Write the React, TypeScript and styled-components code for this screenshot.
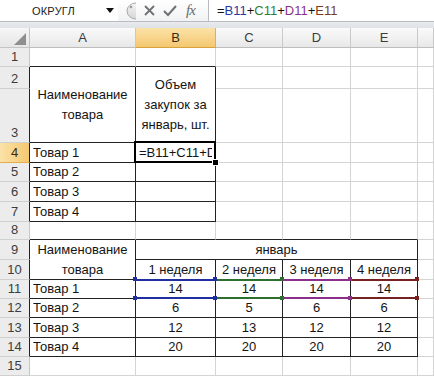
import React from "react";
import styled, { createGlobalStyle } from "styled-components";

const FONT = `"Liberation Sans", Arial, sans-serif`;
const GRID = "#d4d4d4";
const EDGE = "#222";
const INK = "#141414";

const COLS = [30, 106, 80, 67, 68, 67, 16];
const HEAD_H = 20;
const ROWS = [19, 22, 54, 20, 19, 20, 20, 18, 20, 20, 19, 19, 20, 19, 19];
const LETTERS = ["A", "B", "C", "D", "E", ""];
const ACTIVE_COL = 1;
const ACTIVE_ROW = 4;

const RANGES = ["#1f2f9f", "#2c6f2f", "#8a2f8a", "#762020"];

type Align = "left" | "center";

interface CellSpec {
  r: number;
  c: number;
  rs?: number;
  cs?: number;
  text?: string;
  align?: Align;
  active?: boolean;
  range?: number;
}

const GlobalStyle = createGlobalStyle`
  html, body {
    margin: 0;
    padding: 0;
    background: #fff;
    overflow: hidden;
  }
  body {
    font-family: ${FONT};
  }
`;

const Window = styled.div`
  width: 434px;
  height: 376px;
  overflow: hidden;
  display: flex;
  flex-direction: column;
  background: #fff;
`;

const FormulaBar = styled.div`
  height: 22px;
  box-sizing: border-box;
  display: flex;
  border-bottom: 1px solid #b8bcc2;
  background: #fff;
`;

const NameBox = styled.div`
  width: 118px;
  box-sizing: border-box;
  display: flex;
  align-items: center;
  padding: 0 4px 0 32px;
  font-size: 11px;
  color: #222;
  letter-spacing: 0.2px;
`;

const NameText = styled.span`
  flex: 1;
`;

const Controls = styled.div`
  width: 90px;
  box-sizing: border-box;
  display: flex;
  align-items: center;
  padding-left: 4px;
  gap: 8px;
  background: linear-gradient(#ffffff, #f1f2f4);
`;

const FxLabel = styled.span`
  font-family: "Liberation Serif", "Times New Roman", serif;
  font-style: italic;
  font-size: 15px;
  color: #6b6b6b;
  margin-left: 1px;
  letter-spacing: -1px;
`;

const FormulaInput = styled.div`
  flex: 1;
  box-sizing: border-box;
  border-left: 1px solid #b8bcc2;
  padding-left: 8px;
  display: flex;
  align-items: center;
  font-size: 13px;
  color: ${INK};
  white-space: pre;
`;

const Ref = styled.span<{ $color: string }>`
  color: ${(p) => p.$color};
`;

const Band = styled.div`
  height: 6px;
  background: linear-gradient(#e9ebee, #dfe2e6);
`;

const Sheet = styled.div`
  display: grid;
  grid-template-columns: ${COLS.map((c) => `${c}px`).join(" ")};
  grid-template-rows: ${[HEAD_H, ...ROWS].map((r) => `${r}px`).join(" ")};
`;

const Corner = styled.div`
  grid-row: 1;
  grid-column: 1;
  box-sizing: border-box;
  border-right: 1px solid #c5c5c5;
  border-bottom: 1px solid #c5c5c5;
  background: linear-gradient(#f6f6f6, #e6e6e6);
  display: flex;
  align-items: flex-end;
  justify-content: flex-end;
  padding: 0 3px 2px 0;
`;

const ColHead = styled.div<{ $active: boolean }>`
  grid-row: 1;
  box-sizing: border-box;
  border-right: 1px solid ${(p) => (p.$active ? "#e3ae4f" : "#c9c9c9")};
  border-bottom: 1px solid ${(p) => (p.$active ? "#d9a13e" : "#bdbdbd")};
  background: ${(p) =>
    p.$active
      ? "linear-gradient(#fbe2a8, #f4c870)"
      : "linear-gradient(#fafafa, #e8e8e8)"};
  display: flex;
  align-items: center;
  justify-content: center;
  font-size: 13px;
  color: ${(p) => (p.$active ? "#3a2a10" : "#3c3c3c")};
`;

const RowHead = styled.div<{ $active: boolean; $edge: boolean; $row: number }>`
  grid-row: ${(p) => p.$row};
  grid-column: 1;
  box-sizing: border-box;
  border-right: 1px solid
    ${(p) => (p.$edge ? EDGE : p.$active ? "#d9a13e" : "#c5c5c5")};
  border-bottom: 1px solid ${(p) => (p.$active ? "#e3ae4f" : "#d0d0d0")};
  background: ${(p) =>
    p.$active ? "linear-gradient(90deg, #fbe2a8, #f4c870)" : "#ececec"};
  display: flex;
  align-items: flex-end;
  justify-content: center;
  font-size: 13px;
  line-height: 19px;
  color: ${(p) => (p.$active ? "#3a2a10" : "#3c3c3c")};
`;

const Cell = styled.div<{
  $row: number;
  $col: number;
  $rs: number;
  $cs: number;
  $right: string;
  $bottom: string;
  $align: Align;
  $z: number;
}>`
  grid-row: ${(p) => p.$row} / span ${(p) => p.$rs};
  grid-column: ${(p) => p.$col} / span ${(p) => p.$cs};
  position: relative;
  z-index: ${(p) => p.$z};
  box-sizing: border-box;
  min-width: 0;
  border-right: 1px solid ${(p) => p.$right};
  border-bottom: 1px solid ${(p) => p.$bottom};
  display: flex;
  align-items: center;
  justify-content: ${(p) => (p.$align === "left" ? "flex-start" : "center")};
  text-align: ${(p) => p.$align};
  padding: 0 3px;
  font-size: 13px;
  line-height: 20px;
  color: ${INK};
  white-space: pre;
`;

const CellText = styled.span`
  max-width: 100%;
  overflow: hidden;
`;

const ActiveFrame = styled.span`
  position: absolute;
  top: -2px;
  left: -2px;
  right: -1px;
  bottom: -1px;
  border: 2px solid #000;
  pointer-events: none;
`;

const FillHandle = styled.span`
  position: absolute;
  right: -4px;
  bottom: -4px;
  width: 5px;
  height: 5px;
  background: #000;
  border: 1px solid #fff;
`;

const RangeLine = styled.span<{ $color: string; $side: "top" | "bottom" }>`
  position: absolute;
  left: -1px;
  right: -1px;
  height: 2px;
  ${(p) => (p.$side === "top" ? "top: -1px;" : "bottom: -1px;")}
  background: ${(p) => p.$color};
`;

const RangeDot = styled.span<{ $color: string; $v: "top" | "bottom"; $h: "left" | "right" }>`
  position: absolute;
  width: 4px;
  height: 4px;
  background: ${(p) => p.$color};
  ${(p) => (p.$v === "top" ? "top: -3px;" : "bottom: -2px;")}
  ${(p) => (p.$h === "left" ? "left: -3px;" : "right: -2px;")}
`;

function inTable(r: number, c: number) {
  return (r >= 2 && r <= 7 && c <= 1) || (r >= 9 && r <= 14 && c <= 4);
}

const goods = ["Товар 1", "Товар 2", "Товар 3", "Товар 4"];
const values = [
  [14, 14, 14, 14],
  [6, 5, 6, 6],
  [12, 13, 12, 12],
  [20, 20, 20, 20],
];

const specs: CellSpec[] = [
  { r: 2, c: 0, rs: 2, text: "Наименование\nтовара", align: "center" },
  { r: 2, c: 1, rs: 2, text: "Объем\nзакупок за\nянварь, шт.", align: "center" },
  ...goods.map((t, i) => ({ r: 4 + i, c: 0, text: t })),
  { r: 4, c: 1, text: "=B11+C11+D11+E11", active: true },
  { r: 9, c: 0, rs: 2, text: "Наименование\nтовара", align: "center" },
  { r: 9, c: 1, cs: 4, text: "январь", align: "center" },
  ...[1, 2, 3, 4].map((n) => ({ r: 10, c: n, text: `${n} неделя`, align: "center" as Align })),
  ...goods.map((t, i) => ({ r: 11 + i, c: 0, text: t })),
  ...values.flatMap((row, i) =>
    row.map((v, j) => ({
      r: 11 + i,
      c: 1 + j,
      text: String(v),
      align: "center" as Align,
      range: i === 0 ? j : undefined,
    }))
  ),
];

function buildCells(): CellSpec[] {
  const covered = new Set<string>();
  const byKey = new Map<string, CellSpec>();
  specs.forEach((s) => {
    byKey.set(`${s.r}:${s.c}`, s);
    for (let r = s.r; r < s.r + (s.rs ?? 1); r++)
      for (let c = s.c; c < s.c + (s.cs ?? 1); c++)
        if (r !== s.r || c !== s.c) covered.add(`${r}:${c}`);
  });
  const out: CellSpec[] = [];
  for (let r = 1; r <= ROWS.length; r++)
    for (let c = 0; c < LETTERS.length; c++) {
      const key = `${r}:${c}`;
      if (covered.has(key)) continue;
      out.push(byKey.get(key) ?? { r, c });
    }
  return out;
}

function SheetCell({ spec }: { spec: CellSpec }) {
  const rs = spec.rs ?? 1;
  const cs = spec.cs ?? 1;
  const lastC = spec.c + cs - 1;
  const lastR = spec.r + rs - 1;
  const right = inTable(spec.r, lastC) || inTable(spec.r, lastC + 1) ? EDGE : GRID;
  const bottom = inTable(lastR, spec.c) || inTable(lastR + 1, spec.c) ? EDGE : GRID;
  const color = spec.range !== undefined ? RANGES[spec.range] : undefined;
  const z = spec.active ? 6 : spec.range !== undefined ? 10 - spec.range : 0;

  return (
    <Cell
      $row={spec.r + 1}
      $col={spec.c + 2}
      $rs={rs}
      $cs={cs}
      $right={right}
      $bottom={bottom}
      $align={spec.align ?? "left"}
      $z={z}
    >
      {spec.text && <CellText>{spec.text}</CellText>}
      {spec.active && (
        <>
          <ActiveFrame />
          <FillHandle />
        </>
      )}
      {color && (
        <>
          <RangeLine $color={color} $side="top" />
          <RangeLine $color={color} $side="bottom" />
          <RangeDot $color={color} $v="top" $h="left" />
          <RangeDot $color={color} $v="top" $h="right" />
          <RangeDot $color={color} $v="bottom" $h="left" />
          <RangeDot $color={color} $v="bottom" $h="right" />
        </>
      )}
    </Cell>
  );
}

function Knob() {
  return (
    <svg width="14" height="18" viewBox="0 0 14 18">
      <defs>
        <linearGradient id="knob" x1="0" y1="0" x2="0" y2="1">
          <stop offset="0" stopColor="#f4f4f4" />
          <stop offset="1" stopColor="#d6d6d6" />
        </linearGradient>
      </defs>
      <path d="M14 1 A9 8 0 0 0 14 17 Z" fill="url(#knob)" />
      <path d="M14 1 A9 8 0 0 0 14 17" fill="none" stroke="#a9a9a9" strokeWidth="1" />
      <circle cx="9" cy="5" r="1.3" fill="#9a9a9a" />
    </svg>
  );
}

function App() {
  const cells = buildCells();
  return (
    <Window>
      <GlobalStyle />
      <FormulaBar>
        <NameBox>
          <NameText>ОКРУГЛ</NameText>
          <svg width="8" height="5" viewBox="0 0 8 5">
            <path d="M0 0 H8 L4 5 Z" fill="#111" />
          </svg>
        </NameBox>
        <Controls>
          <Knob />
          <svg width="11" height="11" viewBox="0 0 11 11">
            <path d="M1 1 L10 10 M10 1 L1 10" stroke="#707070" strokeWidth="1.8" />
          </svg>
          <svg width="14" height="12" viewBox="0 0 14 12">
            <path d="M1 6 L5 10 L13 1" fill="none" stroke="#707070" strokeWidth="2" />
          </svg>
          <FxLabel>fx</FxLabel>
        </Controls>
        <FormulaInput>
          =<Ref $color="#2a3aa0">B11</Ref>+<Ref $color="#2f7d34">C11</Ref>+
          <Ref $color="#8b338b">D11</Ref>+<Ref $color="#7d3a22">E11</Ref>
        </FormulaInput>
      </FormulaBar>
      <Band />
      <Sheet>
        <Corner>
          <svg width="12" height="12" viewBox="0 0 12 12">
            <path d="M12 0 V12 H0 Z" fill="#8f8f8f" />
          </svg>
        </Corner>
        {LETTERS.map((l, i) => (
          <ColHead key={i} $active={i === ACTIVE_COL} style={{ gridColumn: i + 2 }}>
            {l}
          </ColHead>
        ))}
        {ROWS.map((_, i) => (
          <RowHead
            key={i}
            $row={i + 2}
            $active={i + 1 === ACTIVE_ROW}
            $edge={inTable(i + 1, 0)}
          >
            {i + 1}
          </RowHead>
        ))}
        {cells.map((s) => (
          <SheetCell key={`${s.r}:${s.c}`} spec={s} />
        ))}
      </Sheet>
    </Window>
  );
}

export default App;
